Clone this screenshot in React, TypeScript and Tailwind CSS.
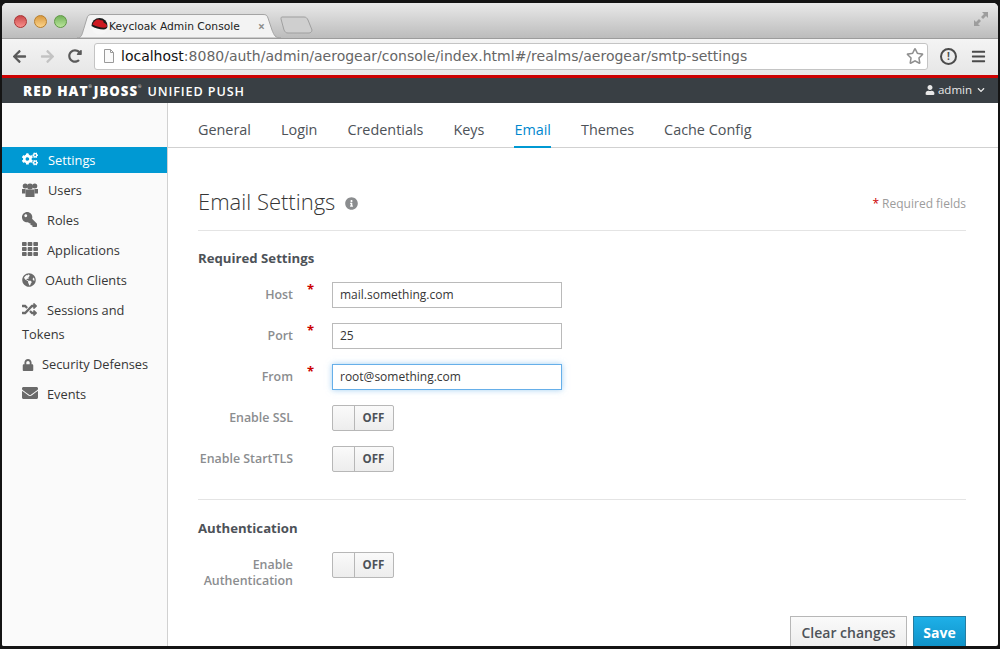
import { ReactNode } from "react";
import {
  FaCogs,
  FaKey,
  FaTh,
  FaGlobeAmericas,
  FaRandom,
  FaLock,
  FaEnvelope,
  FaUser,
  FaInfoCircle,
  FaArrowLeft,
  FaArrowRight,
  FaRedoAlt,
  FaRegStar,
  FaBars,
  FaChevronDown,
} from "react-icons/fa";

function UsersIcon() {
  return (
    <svg width="16" height="14" viewBox="0 0 16 14" fill="currentColor">
      <circle cx="3.200" cy="3" r="2.500" />
      <circle cx="12.800" cy="3" r="2.500" />
      <circle cx="8" cy="3.500" r="3" />
      <path d="M0 6 H3.500 V10.500 H0Z M12.500 6 H16 V10.500 H12.500Z" />
      <path d="M3.500 6.500 H12.500 V14 H3.500Z" />
    </svg>
  );
}

const sidebarItems = [
  { label: "Settings", icon: <FaCogs className="text-[16px]" />, gap: "mr-[10px]", active: true },
  { label: "Users", icon: <UsersIcon />, gap: "mr-[10px]" },
  { label: "Roles", icon: <FaKey className="-scale-x-100 text-[15px]" />, gap: "mr-[10px]" },
  { label: "Applications", icon: <FaTh className="text-[16px]" />, gap: "mr-[9px]" },
  { label: "OAuth Clients", icon: <FaGlobeAmericas className="text-[14px]" />, gap: "mr-[9px]" },
  { label: "Sessions and Tokens", icon: <FaRandom className="text-[15px]" />, gap: "mr-[10px]" },
  { label: "Security Defenses", icon: <FaLock className="text-[12px]" />, gap: "mr-[8px]" },
  { label: "Events", icon: <FaEnvelope className="text-[16px]" />, gap: "mr-[9px]" },
];

const tabs = ["General", "Login", "Credentials", "Keys", "Email", "Themes", "Cache Config"];

function Toggle() {
  return (
    <div className="flex h-[26px] w-[62px] rounded-[2px] border border-[#b7b7b7] bg-gradient-to-b from-[#fafafa] to-[#ededed]">
      <div className="w-[22px] border-r border-[#b7b7b7]" />
      <div className="flex-1 pr-[1px] text-center text-[11.5px] font-bold leading-[24px] text-[#4d5258]">OFF</div>
    </div>
  );
}

function FieldRow({ label, children, required, className, labelClass }: { label: ReactNode; children: ReactNode; required?: boolean; className?: string; labelClass?: string }) {
  return (
    <div className={`flex items-center ${className ?? ""}`}>
      <div className={`w-[95px] text-right text-[12.4px] font-semibold leading-[16px] text-[#8b8d8f] ${labelClass ?? ""}`}>{label}</div>
      <div className="relative h-[26px] w-[39px] self-start">
        {required && <span className="absolute left-[14px] top-0 text-[13px] font-bold leading-[14px] text-[#c00]">*</span>}
      </div>
      <div className="self-start">{children}</div>
    </div>
  );
}

function TextField({ value, focused }: { value: string; focused?: boolean }) {
  return (
    <div
      className={`h-[26px] w-[230px] border px-[7px] text-[12px] leading-[24px] text-[#363636] ${
        focused ? "border-[#66afe9] shadow-[0_0_6px_rgba(102,175,233,0.6)]" : "border-[#bababa]"
      }`}
    >
      {value}
    </div>
  );
}

function RedHatIcon() {
  return (
    <svg width="17" height="17" viewBox="0 0 17 17" className="mr-[1px] shrink-0">
      <circle cx="8.500" cy="8.500" r="8" fill="#f6f6f6" />
      <path d="M.5 8A8 8 0 0 1 16.500 8C16.500 10 15 11.500 12.500 11.500 8.500 11.500 3.500 10 .5 8Z" fill="#1a1a1a" />
      <path d="M1.500 6.500C2.500 3.500 5 1.500 7 1.500c1.500 0 2.500.8 4 .8 1 0 1.500 1.200 1.700 2.500 1.500.6 3.300 1.900 3.300 3.200 0 1.200-1.200 1.700-3 1.700C9.500 9.700 4.500 8 1.500 6.500Z" fill="#cc1820" />
    </svg>
  );
}

export default function App() {
  return (
    <div className="h-[649px] w-[1000px] overflow-hidden bg-[#141414] pb-[3px] pl-[2px] pr-[2px] pt-[3px] font-['Open_Sans',sans-serif]">
      <div className="flex h-full flex-col overflow-hidden rounded-b-[2px] rounded-t-[5px] bg-white">
        {/* browser tab strip */}
        <div className="flex h-[35px] shrink-0 items-end bg-gradient-to-b from-[#e9e9e9] to-[#bcbcbc] pl-[12px] pr-[9px]">
          <div className="mb-[10px] flex gap-[7px] self-end">
            <span className="h-[13px] w-[13px] rounded-full border border-[#a33] bg-gradient-to-b from-[#c9474a] to-[#f88f8c]" />
            <span className="h-[13px] w-[13px] rounded-full border border-[#b87f2c] bg-gradient-to-b from-[#d99a3e] to-[#fbd38a]" />
            <span className="h-[13px] w-[13px] rounded-full border border-[#5f9845] bg-gradient-to-b from-[#74b35a] to-[#b9e59b]" />
          </div>
          <div className="relative ml-[10px] flex h-[24px] w-[204px] items-center pl-[14px]">
            <svg width="204" height="24" viewBox="0 0 204 24" className="absolute left-0 top-0">
              <path d="M0 24 C5 24 5 20 7 14 L10 4 C11 1 12 .5 15 .5 L186 .5 C189 .5 190 1 191 4 L195 16 C197 21 198 24 204 24 Z" fill="#f3f3f3" stroke="#a4a4a4" />
            </svg>
            <div className="relative flex items-center pt-[1px]">
              <RedHatIcon />
              <span className="w-[149px] whitespace-nowrap font-['DejaVu_Sans',sans-serif] text-[10.7px] leading-[16px] text-[#222]">Keycloak Admin Console</span>
              <span className="text-[12px] font-bold leading-[16px] text-[#8d8d8d]">×</span>
            </div>
          </div>
          <svg width="34" height="18" viewBox="0 0 34 18" className="-ml-[1px] mb-[4px]">
            <path d="M2 1 L24 1 C26 1 27 2 28 4 L32 14 C32 16 30 17 29 17 L8 17 C6 17 5 16 4 14 L1 3 C1 2 1 1 2 1Z" fill="#cfcfcf" stroke="#9f9f9f" />
          </svg>
          <svg width="16" height="16" viewBox="0 0 16 16" className="mb-[11px] ml-auto">
            <path d="M9 1 L15 1 L15 7 L13 5 L10 8 L8 6 L11 3Z" fill="#9d9d9d" />
            <path d="M1 9 L1 15 L7 15 L5 13 L8 10 L6 8 L3 11Z" fill="#9d9d9d" />
          </svg>
        </div>

        {/* browser toolbar */}
        <div className="flex h-[37px] shrink-0 items-center border-t border-[#9c9c9c] bg-gradient-to-b from-[#f4f4f4] to-[#e6e6e6] pb-[2px] pl-[10px]">
          <FaArrowLeft className="text-[15px] text-[#5a5a5a]" />
          <FaArrowRight className="ml-[13px] text-[15px] text-[#c3c3c3]" />
          <FaRedoAlt className="ml-[13px] text-[14px] text-[#5a5a5a]" />
          <div className="ml-[12px] flex h-[27px] w-[834px] items-center rounded-[3px] border border-[#c4c4c4] bg-white pl-[8px] pr-[3px]">
            <svg width="12" height="14" viewBox="0 0 12 14" className="mr-[6px] shrink-0">
              <path d="M1.500.5 H7.500 L10.500 3.500 V13.500 H1.500Z M7.500.5 V3.500 H10.500" fill="#fafafa" stroke="#9a9a9a" />
            </svg>
            <span className="whitespace-nowrap font-['DejaVu_Sans',sans-serif] text-[14px] leading-[20px] text-[#666]">
              <span className="text-[#111]">localhost</span>:8080/auth/admin/aerogear/console/index.html#/realms/aerogear/smtp-settings
            </span>
            <FaRegStar className="ml-auto text-[18px] text-[#8f8f8f]" />
          </div>
          <div className="ml-[12px] flex h-[17px] w-[17px] items-center justify-center rounded-full border-2 border-[#4c4c4c] text-[10px] font-bold leading-none text-[#4c4c4c]">!</div>
          <FaBars className="ml-[14px] text-[15px] text-[#4a4a4a]" />
        </div>
        <div className="h-[3px] shrink-0 bg-[#cc0000]" />

        {/* app header */}
        <div className="flex h-[25px] shrink-0 items-center justify-between bg-[#393f44] pl-[21px] pr-[13px] text-white">
          <div className="flex items-baseline whitespace-nowrap leading-[25px]">
            <span className="text-[13.6px] font-extrabold tracking-[1px]">RED HAT</span>
            <span className="self-start pt-[7px] text-[4px] leading-none">®</span>
            <span className="ml-[2px] text-[13.200px] font-extrabold tracking-[1px]">JBOSS</span>
            <span className="self-start pt-[7px] text-[4px] leading-none">®</span>
            <span className="ml-[6px] text-[12.6px] font-semibold tracking-[0.9px]">UNIFIED PUSH</span>
          </div>
          <div className="flex items-center pb-[1px] text-[11.5px] text-[#e8e8e8]">
            <FaUser className="mr-[3px] text-[10px]" />
            admin
            <FaChevronDown className="ml-[5px] text-[8px]" />
          </div>
        </div>

        {/* page */}
        <div className="flex min-h-0 flex-1">
          <nav className="flex w-[166px] shrink-0 flex-col gap-[4px] border-r border-[#d1d1d1] bg-[#fafafa] pt-[44px]">
            {sidebarItems.map((item) => (
              <div
                key={item.label}
                className={`py-[1px] pl-[20px] text-[12.8px] leading-[24px] ${
                  item.active ? "bg-[#0099d3] font-medium text-white" : "text-[#363636]"
                }`}
              >
                <span className={`${item.gap} inline-block align-[-2px] ${item.active ? "text-white" : "text-[#6a6a6a]"}`}>{item.icon}</span>
                {item.label}
              </div>
            ))}
          </nav>

          <main className="flex min-w-0 flex-1 flex-col">
            <div className="flex h-[45px] shrink-0 gap-[30px] border-b border-[#d1d1d1] pl-[30px]">
              {tabs.map((tab) => (
                <div
                  key={tab}
                  className={`-mb-[1px] h-[45px] pt-[16px] text-[14.4px] leading-[22px] ${
                    tab === "Email" ? "border-b-2 border-[#0099d3] text-[#0088ce]" : "text-[#4d5258]"
                  }`}
                >
                  {tab}
                </div>
              ))}
            </div>

            <div className="ml-[30px] mr-[32px] flex flex-col">
              <div className="flex h-[83px] shrink-0 items-end justify-between border-b border-[#e4e4e4] pb-[12px]">
                <div className="flex items-center">
                  <h1 className="text-[22px] font-light leading-[34px] text-[#363636]">Email Settings</h1>
                  <FaInfoCircle className="ml-[10px] mt-[4px] text-[13px] text-[#8b8d8f]" />
                </div>
                <div className="mb-[6px] text-[12px] leading-[16px] text-[#9c9c9c]">
                  <span className="text-[#c00]">*</span> Required fields
                </div>
              </div>

              <h2 className="mt-[18px] text-[13.200px] font-bold leading-[18px] text-[#4d5258]">Required Settings</h2>
              <FieldRow label="Host" required className="mt-[15px]">
                <TextField value="mail.something.com" />
              </FieldRow>
              <FieldRow label="Port" required className="mt-[15px]">
                <TextField value="25" />
              </FieldRow>
              <FieldRow label="From" required className="mt-[15px]">
                <TextField value="root@something.com" focused />
              </FieldRow>
              <FieldRow label="Enable SSL" className="mt-[15px]">
                <Toggle />
              </FieldRow>
              <FieldRow label="Enable StartTLS" className="mt-[15px]">
                <Toggle />
              </FieldRow>

              <div className="mt-[27px] border-t border-[#e4e4e4]" />
              <h2 className="mt-[19px] text-[13.200px] font-bold leading-[18px] text-[#4d5258]">Authentication</h2>
              <FieldRow label={<>Enable<br />Authentication</>} className="mt-[15px]" labelClass="pt-[5px]">
                <Toggle />
              </FieldRow>

              <div className="mt-[27px] flex justify-end gap-[6px]">
                <button className="h-[32px] w-[117px] border border-[#b7b7b7] bg-gradient-to-b from-[#fafafa] to-[#ededed] text-[14px] font-semibold text-[#4d5258]">Clear changes</button>
                <button className="h-[32px] w-[53px] border border-[#267da1] bg-gradient-to-b from-[#1eb0e8] to-[#0f92c8] text-[14px] font-bold text-white">Save</button>
              </div>
            </div>
          </main>
        </div>
      </div>
    </div>
  );
}
